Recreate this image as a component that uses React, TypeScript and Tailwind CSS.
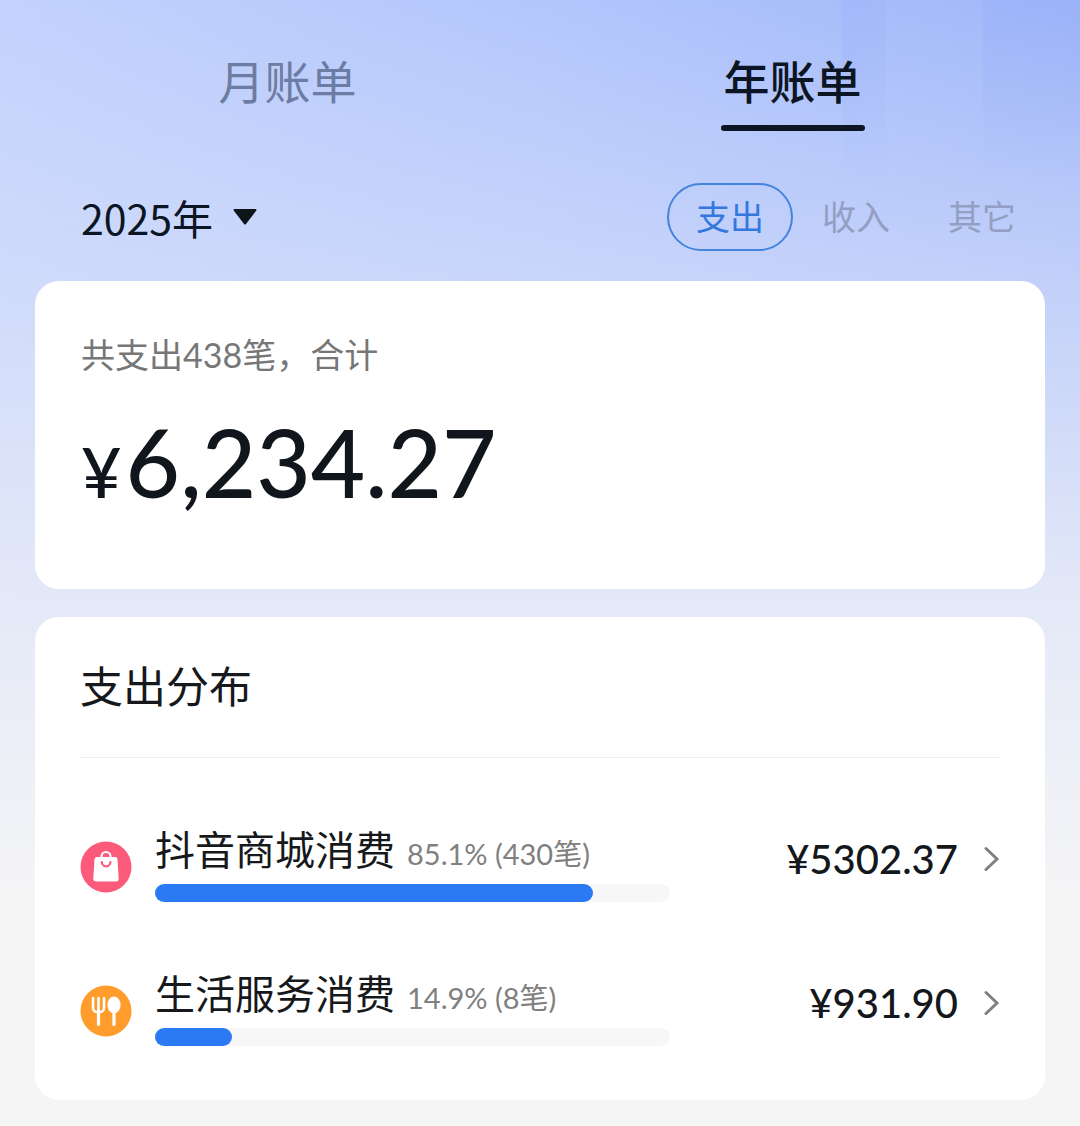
import React, { useState } from 'react';

type Category = {
  name: string;
  percent: number;
  count: number;
  amount: string;
  icon: React.ReactNode;
};

const ShoppingBagIcon = () => (
  <svg viewBox="0 0 52 52" className="size-13" aria-hidden="true">
    <circle cx="26" cy="26" r="25.5" fill="#fb5a7b" />
    <path d="M21.5 17v-1.5a4.5 4.5 0 0 1 9 0V17" fill="none" stroke="#fff" strokeWidth="2.2" />
    <path
      d="M17 16h18a2.500 2.500 0 0 1 2.500 2.300l1.200 19a3 3 0 0 1-3 3.200H16.300a3 3 0 0 1-3-3.200l1.200-19A2.500 2.500 0 0 1 17 16z"
      fill="#fff"
    />
    <path d="M21.8 21a4.3 4.3 0 0 0 8.6 0" fill="none" stroke="#fb5a7b" strokeWidth="2.2" strokeLinecap="round" />
  </svg>
);

const DiningIcon = () => (
  <svg viewBox="0 0 52 52" className="size-13" aria-hidden="true">
    <circle cx="26" cy="26" r="25.5" fill="#ff9c2b" />
    <g fill="none" stroke="#fff" strokeLinecap="round">
      <path d="M13 13v10a4 4 0 0 0 4 4h3a4 4 0 0 0 4-4V13" strokeWidth="2.6" />
      <path d="M18.5 13v12" strokeWidth="2.6" />
      <path d="M18.5 26v13.5" strokeWidth="3.2" />
      <path d="M34 26v13.5" strokeWidth="3.2" />
    </g>
    <ellipse cx="34" cy="20" rx="6.6" ry="8.5" fill="#fff" />
  </svg>
);

const ChevronIcon = () => (
  <svg viewBox="0 0 16 26" className="h-[26px] w-4" aria-hidden="true">
    <path d="M2 2.5 13 13 2 23.5" fill="none" stroke="#808080" strokeWidth="3" strokeLinecap="round" />
  </svg>
);

const categories: Category[] = [
  { name: '抖音商城消费', percent: 85.1, count: 430, amount: '5302.37', icon: <ShoppingBagIcon /> },
  { name: '生活服务消费', percent: 14.9, count: 8, amount: '931.90', icon: <DiningIcon /> },
];

const tabs = ['月账单', '年账单'];
const filters = ['支出', '收入', '其它'];

const CategoryRow = ({ name, percent, count, amount, icon }: Category) => (
  <button type="button" className="mt-[66px] flex w-full items-center text-left">
    <span className="pt-2">{icon}</span>
    <span className="ml-[23px] block w-[56%]">
      <span className="flex h-14 items-baseline gap-3 whitespace-nowrap leading-13">
        <span className="text-[40px] text-[#16181b]">{name}</span>
        <span className="text-[29px] text-[#808080]">
          {percent}% ({count}笔)
        </span>
      </span>
      <span className="mt-1 block h-[18px] rounded-full bg-[#f7f7f7]">
        <span className="block h-full rounded-full bg-[#2c7af3]" style={{ width: `${percent}%` }} />
      </span>
    </span>
    <span className="ml-auto flex items-center gap-[26px] pb-2">
      <span className="text-[40px] leading-14 font-medium text-[#14171b]">¥{amount}</span>
      <ChevronIcon />
    </span>
  </button>
);

export default function App() {
  const [activeTab, setActiveTab] = useState('年账单');
  const [activeFilter, setActiveFilter] = useState('支出');
  const [year, setYear] = useState('2025');

  return (
    <div className="relative isolate min-h-screen bg-[#f5f5f6] bg-[linear-gradient(to_bottom,transparent,#d8e1fa99_280px,#e4e9f8_600px,#f5f5f6_900px),linear-gradient(to_right,#c3d2fd,#b3c6fc_50%,#9fb6f9)] px-[35px] pb-[25px] font-['Lato','Noto_Sans_CJK_SC',sans-serif]">
      <div className="absolute inset-x-0 top-0 -z-10 h-44 bg-[linear-gradient(to_right,transparent_78%,#8fa8f638_78%,#8fa8f620_82%,transparent_82%,transparent_91%,#8fa8f638_91%)] mask-b-from-20%" />
      <nav className="grid grid-cols-2 pt-13">
        {tabs.map((tab) => (
          <button
            key={tab}
            type="button"
            onClick={() => setActiveTab(tab)}
            className={`flex flex-col items-center text-[46px] leading-[60px] ${
              tab === activeTab ? 'font-medium text-[#0c1524]' : 'text-[#6c7ca3]'
            }`}
          >
            {tab}
            <span className={`mt-[13px] h-1.5 w-36 rounded-full ${tab === activeTab ? 'bg-[#0c1524]' : ''}`} />
          </button>
        ))}
      </nav>

      <div className="mt-13 flex items-center justify-between pl-[46px]">
        <label className="flex items-center gap-5">
          <select
            aria-label="年份"
            value={year}
            onChange={(e) => setYear(e.target.value)}
            className="field-sizing-content appearance-none font-['Noto_Sans_CJK_SC',sans-serif] text-[41px] leading-14 text-[#0c1524]"
          >
            <option value="2025">2025年</option>
            <option value="2024">2024年</option>
          </select>
          <svg viewBox="0 0 24 16" className="h-4 w-6" aria-hidden="true">
            <path d="M1.5 0h21a1 1 0 0 1 .8 1.6L13 15a1.300 1.300 0 0 1-2 0L.7 1.6A1 1 0 0 1 1.5 0z" fill="#0c1519" />
          </svg>
        </label>
        <div className="flex">
          {filters.map((filter) => (
            <button
              key={filter}
              type="button"
              onClick={() => setActiveFilter(filter)}
              className={`rounded-full border-2 px-[27px] py-2 text-[34px] leading-12 ${
                filter === activeFilter ? 'border-[#4584dc] text-[#3478de]' : 'border-transparent text-[#929fc3]'
              }`}
            >
              {filter}
            </button>
          ))}
        </div>
      </div>

      <section className="mt-[30px] rounded-3xl bg-white px-[46px] pt-[50px] pb-[76px]">
        <p className="text-[34px] leading-12 text-[#777]">共支出438笔，合计</p>
        <p className="mt-8 text-[94px] leading-[102px] font-medium text-[#11161d]">
          <span className="mr-1 text-[70px] leading-none">¥</span>6,234.27
        </p>
      </section>

      <section className="mt-7 rounded-3xl bg-white px-[45px] pt-10 pb-[54px]">
        <h2 className="border-b border-[#eee] pb-10 text-[43px] leading-[60px] text-[#16181b]">支出分布</h2>
        {categories.map((category) => (
          <CategoryRow key={category.name} {...category} />
        ))}
      </section>
    </div>
  );
}
